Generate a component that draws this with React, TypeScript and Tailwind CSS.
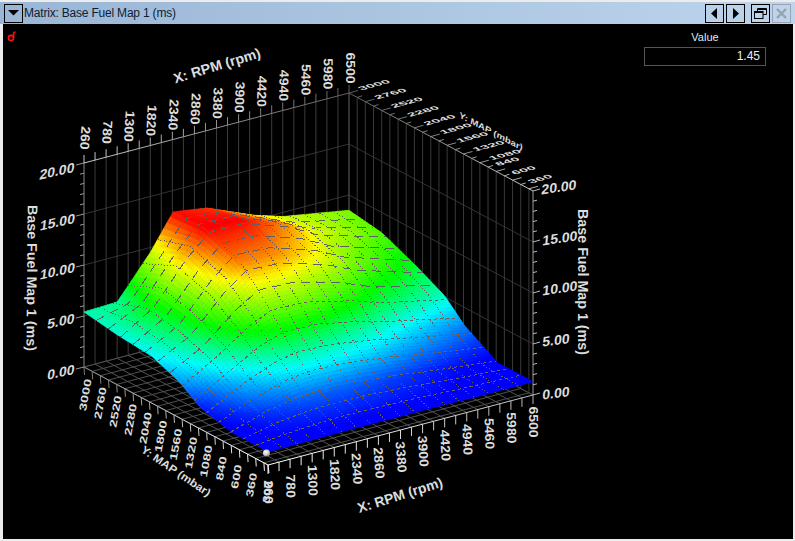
import React from "react";

const A = [84, 367];
const AU = [265, -70];
const AV = [184, 98];
const HS = 10.2;
const P = (u: number, v: number, h = 0): [number, number] => [
  A[0] + u * AU[0] + v * AV[0],
  A[1] + u * AU[1] + v * AV[1] - h * HS,
];
const US = [0, 0.125, 0.25, 0.336, 0.464, 0.638, 0.75, 1];
const VS = [0, 0.18, 0.37, 0.52, 0.63, 0.81, 1];
const TB = [
  [5.4, 5.5, 9.5, 12.9, 12.4, 10.5, 9.6, 8.5],
  [4.9, 7.0, 11, 13, 13, 11.4, 9.8, 8.0],
  [4.6, 6.3, 9.8, 11.6, 11.4, 10, 8.6, 6.5],
  [3.5, 5.3, 7.6, 8.7, 8.6, 7.5, 6.5, 5.1],
  [2.1, 4.0, 5.6, 6.2, 6.1, 5.3, 4.6, 3.2],
  [1.3, 2.3, 2.8, 2.9, 2.8, 2.4, 2.0, 1.3],
  [1.3, 1.3, 1.35, 1.35, 1.35, 1.35, 1.3, 1.3],
];
const seg = (a: number[], x: number) => {
  let i = 0;
  while (i < a.length - 2 && x > a[i + 1]) i++;
  return [i, (x - a[i]) / (a[i + 1] - a[i])];
};
const height = (u: number, v: number) => {
  const [i, s] = seg(US, u);
  const [j, t] = seg(VS, v);
  return (
    (TB[j][i] * (1 - s) + TB[j][i + 1] * s) * (1 - t) +
    (TB[j + 1][i] * (1 - s) + TB[j + 1][i + 1] * s) * t
  );
};
const STOPS: [number, number, number, number][] = [
  [0, 0, 0, 255],
  [1.6, 0, 0, 255],
  [2.2, 0, 40, 255],
  [4.6, 0, 255, 255],
  [7, 0, 255, 0],
  [10.2, 255, 255, 0],
  [13, 255, 0, 0],
];
const color = (h: number) => {
  for (let i = 0; i < STOPS.length - 1; i++) {
    const a = STOPS[i];
    const b = STOPS[i + 1];
    if (h <= b[0]) {
      const t = (h - a[0]) / (b[0] - a[0]);
      return `rgb(${Math.round(a[1] + (b[1] - a[1]) * t)},${Math.round(a[2] + (b[2] - a[2]) * t)},${Math.round(a[3] + (b[3] - a[3]) * t)})`;
    }
  }
  return "rgb(255,0,0)";
};
const pt = (p: [number, number]) => `${p[0].toFixed(1)},${p[1].toFixed(1)}`;
const line = (a: [number, number], b: [number, number], stroke: string, w = 1, key?: React.Key) => (
  <line key={key} x1={a[0]} y1={a[1]} x2={b[0]} y2={b[1]} stroke={stroke} strokeWidth={w} />
);
const grey = (n: number) => {
  const c = Math.round(n);
  return `rgb(${c},${c},${c})`;
};

function L({ m, size = 13, children, fill = "#dcdcdc" }: { m: number[]; size?: number; children: React.ReactNode; fill?: string }) {
  return (
    <text
      transform={`matrix(${m.join(" ")})`}
      textAnchor="middle"
      dominantBaseline="central"
      fontSize={size}
      fontWeight={700}
      fill={fill}
    >
      {children}
    </text>
  );
}
const rot = (x: number, y: number, deg: number, sx = 1, sy = 1) => {
  const r = (deg * Math.PI) / 180;
  return [Math.cos(r) * sx, Math.sin(r) * sx, -Math.sin(r) * sy, Math.cos(r) * sy, x, y];
};

const RPMS = [260, 780, 1300, 1820, 2340, 2860, 3380, 3900, 4420, 4940, 5460, 5980, 6500];
const MAPS = [3000, 2760, 2520, 2280, 2040, 1800, 1560, 1320, 1080, 840, 600, 360];

function Surface() {
  const polys: React.ReactNode[] = [];
  const N = 80;
  for (let j = 0; j < N; j++) {
    for (let i = N - 1; i >= 0; i--) {
      const u0 = i / N, u1 = (i + 1) / N, v0 = j / N, v1 = (j + 1) / N;
      const c = color(height((u0 + u1) / 2, (v0 + v1) / 2));
      polys.push(
        <polygon
          key={`${i}-${j}`}
          points={[P(u0, v0, height(u0, v0)), P(u1, v0, height(u1, v0)), P(u1, v1, height(u1, v1)), P(u0, v1, height(u0, v1))].map(pt).join(" ")}
          fill={c}
          stroke={c}
          strokeWidth={0.7}
        />,
      );
    }
  }
  const mesh: React.ReactNode[] = [];
  const poly = (f: (t: number) => [number, number]) => {
    const out: string[] = [];
    for (let k = 0; k <= 60; k++) out.push(pt(f(k / 60)));
    return out.join(" ");
  };
  for (let k = 1; k < 18; k++) {
    const u = k / 18;
    mesh.push(
      <polyline key={`u${k}`} points={poly((t) => P(u, t, height(u, t)))} fill="none" stroke="#6a5a5c" strokeWidth={1} strokeDasharray="1 2" shapeRendering="crispEdges" />,
    );
  }
  for (let k = 1; k < 15; k++) {
    const v = k / 15;
    mesh.push(
      <polyline
        key={`v${k}`}
        points={poly((t) => P(t, v, height(t, v)))}
        fill="none"
        stroke={v < 0.5 ? "#5f5f66" : "#6e5f58"}
        strokeWidth={1}
        strokeDasharray={v < 0.5 ? "9 6" : "3 3"}
        shapeRendering="crispEdges"
      />,
    );
  }
  return (
    <g>
      <g>{polys}</g>
      {mesh}
    </g>
  );
}

function Axes() {
  const out: React.ReactNode[] = [];
  for (const h of [5, 10, 15]) {
    out.push(line(P(0, 0, h), P(1, 0, h), "#333", 1, `wa${h}`));
    out.push(line(P(1, 0, h), P(1, 1, h), "#333", 1, `wb${h}`));
  }
  out.push(line(P(0, 0, 0), P(1, 0, 0), "#333", 1, "w0a"));
  out.push(line(P(1, 0, 0), P(1, 1, 0), "#333", 1, "w0b"));
  for (let k = 0; k <= 24; k++) {
    const u = k / 24;
    const g = 200 - u * 105;
    const base = P(u, 0, 0);
    const top = P(u, 0, 20);
    out.push(line(base, top, k === 0 ? "#888" : k === 24 ? "#555" : "#3d3d3d", 1, `uv${k}`));
    out.push(line(top, [top[0], top[1] - 8], grey(g), 1, `ut${k}`));
  }
  for (let k = 0; k <= 22; k++) {
    const v = (k * 120) / 2700;
    const base = P(1, v, 0);
    const top = P(1, v, 20);
    out.push(line(base, top, "#3a3a3a", 1, `vv${k}`));
    const g = 90 + v * 90;
    out.push(line(top, [top[0] + (k % 2 ? 5 : 9), top[1] - (k % 2 ? 1.5 : 2.5)], grey(g), 1, `vt${k}`));
  }
  out.push(line(P(0, 0, 20), P(1, 0, 20), "url(#edgeA)", 1, "ea"));
  out.push(line(P(1, 0, 20), P(1, 1, 20), "url(#edgeB)", 1, "eb"));
  for (let k = 0; k <= 24; k++) {
    const u = k / 24;
    out.push(line(P(u, 0), P(u, 1), "#505050", 1, `fu${k}`));
  }
  for (let k = 0; k <= 22; k++) {
    const v = (k * 120) / 2700;
    out.push(line(P(0, v), P(1, v), "#505050", 1, `fv${k}`));
  }
  out.push(line(P(1, 1, 0), P(1, 1, 20), "#9a9a9a", 1, "vr"));
  out.push(line(P(0, 0), P(0, 1), "url(#edgeC)", 1, "fa"));
  out.push(line(P(0, 1), P(1, 1), "url(#edgeD)", 1, "fb"));
  for (let k = 0; k <= 22; k++) {
    const v = (k * 120) / 2700;
    const b = P(0, v);
    out.push(line(b, [b[0] + 0.5, b[1] + 8], grey(120 + v * 130), 1, `ft${k}`));
  }
  out.push(line(P(0, 1), [P(0, 1)[0] + 1, P(0, 1)[1] + 8], "#fff", 1, "ftb"));
  for (let k = 0; k <= 24; k++) {
    const b = P(k / 24, 1);
    out.push(line(b, [b[0], b[1] + 9], grey(250 - (k / 24) * 70), 1, `gt${k}`));
  }
  for (let h = 0; h <= 20; h++) {
    const maj = h % 5 === 0;
    const a = P(0, 0, h);
    out.push(line(a, [a[0] - (maj ? 8 : 4), a[1] + (maj ? 2 : 1)], "#999", 1, `hl${h}`));
    const c = P(1, 1, h);
    out.push(line(c, [c[0] + (maj ? 7 : 4), c[1] - (maj ? 2 : 1)], "#bbb", 1, `hr${h}`));
  }
  return <g>{out}</g>;
}

function Labels() {
  const out: React.ReactNode[] = [];
  RPMS.forEach((r, i) => {
    const u = i / 12;
    const p = P(u, 0, 20);
    out.push(<L key={`rt${r}`} m={rot(p[0] + 1, p[1] - 25, 94 - 4 * u, 1.08, 1)}>{r}</L>);
    const b = P(u, 1, 0);
    out.push(<L key={`rb${r}`} m={rot(b[0] + 0.5, b[1] + 27, 90 - 4 * Math.sin(u * 3.14), 1.08, 1)}>{r}</L>);
  });
  MAPS.forEach((m) => {
    const v = (3000 - m) / 2700;
    const b = P(0, v, 0);
    const long = m >= 1000;
    out.push(<L key={`ml${m}`} m={rot(b[0] + 1.5 - 14 * v, b[1] + 28 - 5 * v - (long ? 0 : 1), -80, 1.12, 0.8)}>{m}</L>);
    const t = P(1, v, 20);
    out.push(
      <L key={`mt${m}`} m={[1.04, -0.28, 0.5, 0.34, t[0] + (long ? 25 : 11), t[1] - (long ? 8 : 10)]}>{m}</L>,
    );
  });
  out.push(<L key="m300" m={rot(267, 492, -82, 1, 0.8)}>300</L>);
  out.push(<L key="xt" m={rot(217, 65.5, -17, 1.02, 1)} size={14}>X: RPM (rpm)</L>);
  out.push(<L key="xb" m={rot(400, 495, -17.5, 1, 1)} size={14}>X: RPM (rpm)</L>);
  out.push(<L key="yb" m={rot(176, 471, 34, 0.92, 0.85)} size={13}>Y: MAP (mbar)</L>);
  out.push(<L key="yt" m={[0.72, 0.38, -0.12, 0.62, 491, 131]} size={13}>Y: MAP (mbar)</L>);
  out.push(<L key="zl" m={rot(32, 278, 90.5, 1.02, 1)} size={14}>Base Fuel Map 1 (ms)</L>);
  out.push(<L key="zr" m={rot(583, 282, 90, 1.02, 1)} size={14}>Base Fuel Map 1 (ms)</L>);
  const lv: [string, number, number][] = [["20.00", 57, 171], ["15.00", 57.5, 222], ["10.00", 57.5, 271], ["5.00", 61, 321], ["0.00", 61, 372]];
  lv.forEach(([t, x, y]) => out.push(<L key={`l${t}`} m={[1, -0.22, -0.12, 1, x, y]} size={14}>{t}</L>));
  const rv: [string, number, number][] = [["20.00", 559, 187], ["15.00", 560, 238], ["10.00", 560, 288], ["5.00", 556, 340], ["0.00", 556, 393]];
  rv.forEach(([t, x, y]) => out.push(<L key={`r${t}`} m={[1, -0.14, -0.08, 1, x, y]} size={14}>{t}</L>));
  return <g>{out}</g>;
}

function Chart() {
  return (
    <svg viewBox="3 24 790 515" className="absolute inset-0 h-full w-full">
      <defs>
        <linearGradient id="edgeA" gradientUnits="userSpaceOnUse" x1="84" y1="163" x2="349" y2="93">
          <stop offset="0" stopColor="#c8c8c8" />
          <stop offset="1" stopColor="#5f5f5f" />
        </linearGradient>
        <linearGradient id="edgeB" gradientUnits="userSpaceOnUse" x1="349" y1="93" x2="533" y2="194">
          <stop offset="0" stopColor="#5f5f5f" />
          <stop offset="1" stopColor="#c8c8c8" />
        </linearGradient>
        <linearGradient id="edgeC" gradientUnits="userSpaceOnUse" x1="84" y1="367" x2="268" y2="465">
          <stop offset="0" stopColor="#888" />
          <stop offset="1" stopColor="#fff" />
        </linearGradient>
        <linearGradient id="edgeD" gradientUnits="userSpaceOnUse" x1="268" y1="465" x2="533" y2="395">
          <stop offset="0" stopColor="#fff" />
          <stop offset="1" stopColor="#bbb" />
        </linearGradient>
        <radialGradient id="ball" cx="0.4" cy="0.35" r="0.7">
          <stop offset="0" stopColor="#ffffff" />
          <stop offset="0.6" stopColor="#c8c8c8" />
          <stop offset="1" stopColor="#6a6a6a" />
        </radialGradient>
      </defs>
      <Axes />
      <Surface />
      <circle cx="266.5" cy="453" r="3.6" fill="url(#ball)" />
      <Labels />
    </svg>
  );
}

function Btn({ children, disabled }: { children: React.ReactNode; disabled?: boolean }) {
  return (
    <div className={`flex h-[19px] w-[19px] items-center justify-center border ${disabled ? "border-[#9aa3ad]" : "border-black"}`}>
      {children}
    </div>
  );
}

export default function App() {
  return (
    <div className="flex h-[541px] w-[795px] flex-col overflow-hidden bg-[#ececec] pl-[3px] pr-[2px] pb-[2px] pt-[2px] font-['Liberation_Sans',sans-serif]">
      <div className="ml-[-3px] mr-[-2px] flex h-[22px] shrink-0 items-center bg-gradient-to-r from-[#9ab6d6] to-[#bdd4ec] pl-[4px] pr-[4px]">
        <Btn>
          <svg width="11" height="6" viewBox="0 0 11 6"><polygon points="0,0 11,0 5.5,5.5" fill="#000" /></svg>
        </Btn>
        <span className="ml-[1px] text-[12px] tracking-[-0.2px] text-[#10202f]">Matrix: Base Fuel Map 1 (ms)</span>
        <div className="ml-auto flex items-center">
          <Btn><svg width="7" height="11" viewBox="0 0 7 11"><polygon points="6,0 6,11 0,5.5" fill="#000" /></svg></Btn>
          <div className="ml-[2px]"><Btn><svg width="7" height="11" viewBox="0 0 7 11"><polygon points="1,0 1,11 7,5.5" fill="#000" /></svg></Btn></div>
          <div className="ml-[6px]">
            <Btn>
              <svg width="13" height="11" viewBox="0 0 13 11" fill="none" stroke="#000">
                <path d="M3.5 3V0.5H12.5V6.5H9" /><path d="M3.5 1.5H12.5" />
                <rect x="0.5" y="3.5" width="8.5" height="7" /><path d="M0.5 4.5H9" />
              </svg>
            </Btn>
          </div>
          <div className="ml-[2px]">
            <Btn disabled>
              <svg width="11" height="11" viewBox="0 0 11 11" stroke="#98a2ac" strokeWidth="2.4"><path d="M1 1L10 10M10 1L1 10" /></svg>
            </Btn>
          </div>
        </div>
      </div>
      <div className="relative flex-1 bg-black">
        <Chart />
        <svg width="10" height="11" viewBox="0 0 10 11" className="absolute left-[4px] top-[7px]" fill="none" stroke="#ff1010" strokeWidth="1.6">
          <circle cx="4" cy="7" r="2.6" />
          <path d="M6.6 7V2.2Q6.6 1 8.5 1" />
        </svg>
        <div className="absolute left-[641px] top-[7px] flex w-[122px] flex-col items-center">
          <span className="text-[11px] leading-[13px] text-[#dfe8f0]">Value</span>
          <div className="mt-[3px] h-[19px] w-full border border-[#555] pr-[5px] text-right text-[12px] leading-[17px] text-[#e8eef4]">1.45</div>
        </div>
      </div>
    </div>
  );
}
